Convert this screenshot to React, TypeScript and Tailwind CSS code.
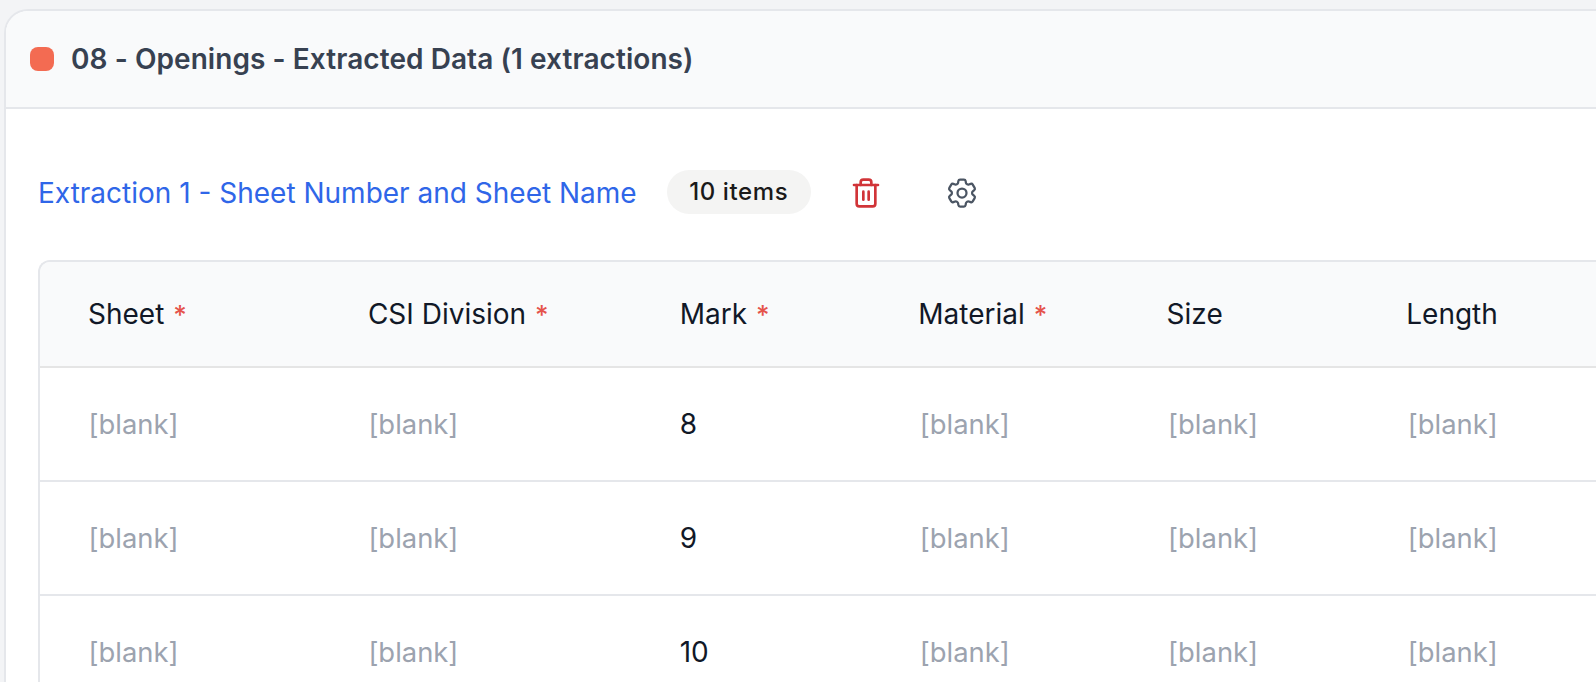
import { Trash2 } from "lucide-react";
import { HiOutlineCog6Tooth } from "react-icons/hi2";

const columns = [
  { label: "Sheet", required: true, width: "w-[283px]" },
  { label: "CSI Division", required: true, width: "w-[315px]" },
  { label: "Mark", required: true, width: "w-[241px]" },
  { label: "Material", required: true, width: "w-[250px]" },
  { label: "Size", required: false, width: "w-[242px]" },
  { label: "Length", required: false, width: "w-[240px]" },
];

const marks = ["8", "9", "10"];

const Blank = () => <span className="text-[27.4px] text-[#9ca3af]">[blank]</span>;

const App = () => {
  return (
    <div className="h-screen overflow-hidden bg-[#f3f4f6] pt-[9px] pl-[4px] font-['Inter',sans-serif]">
      <div className="h-[720px] rounded-tl-[24px] border-t-2 border-l-2 border-[#e5e7eb] bg-white">
        <div className="flex h-[98px] items-center gap-[17px] rounded-tl-[22px] border-b-2 border-[#e5e7eb] bg-[#f9fafb] pl-[24px]">
          <span className="h-[24px] w-[24px] rounded-[8px] bg-[#f36b52]" />
          <h2 className="text-[28px] font-semibold tracking-[0.07px] text-[#374151]">
            08 - Openings - Extracted Data (1 extractions)
          </h2>
        </div>

        <div className="pt-[61px] pl-[32px]">
          <div className="flex h-[46px] items-center">
            <span className="text-[28px] text-[#2f66e8]">
              Extraction 1 - Sheet Number and Sheet Name
            </span>
            <span className="mt-[-2px] ml-[30px] rounded-full bg-[#f4f4f3] px-[22.5px] py-[9px] text-[24px] leading-[26px] font-medium tracking-[0.6px] text-[#1a1a1a]">
              10 items
            </span>
            <Trash2 className="ml-[39px] h-[32px] w-[32px] text-[#d13438]" strokeWidth={2} />
            <HiOutlineCog6Tooth className="ml-[62px] h-[36px] w-[36px] text-[#4b5563]" />
          </div>

          <div className="mt-[44px] overflow-hidden rounded-tl-[12px] border-t-2 border-l-2 border-[#e5e7eb]">
            <table className="table-fixed border-collapse text-[28px] text-[#111827]">
              <thead>
                <tr className="h-[105px] border-b-2 border-[#e5e5e5] bg-[#f9fafb]">
                  {columns.map((col) => (
                    <th key={col.label} className={`${col.width} pl-[48px] text-left font-normal`}>
                      {col.label}
                      {col.required && <span className="ml-[9px] text-[26px] font-medium text-[#e5534b]">*</span>}
                    </th>
                  ))}
                </tr>
              </thead>
              <tbody>
                {marks.map((mark) => (
                  <tr key={mark} className="h-[114px] border-b-2 border-[#e5e7eb]">
                    <td className="pl-[48.5px]"><Blank /></td>
                    <td className="pl-[48.5px]"><Blank /></td>
                    <td className="pl-[48px]">{mark}</td>
                    <td className="pl-[49.5px]"><Blank /></td>
                    <td className="pl-[49.5px]"><Blank /></td>
                    <td className="pl-[49.5px]"><Blank /></td>
                  </tr>
                ))}
              </tbody>
            </table>
          </div>
        </div>
      </div>
    </div>
  );
};

export default App;
